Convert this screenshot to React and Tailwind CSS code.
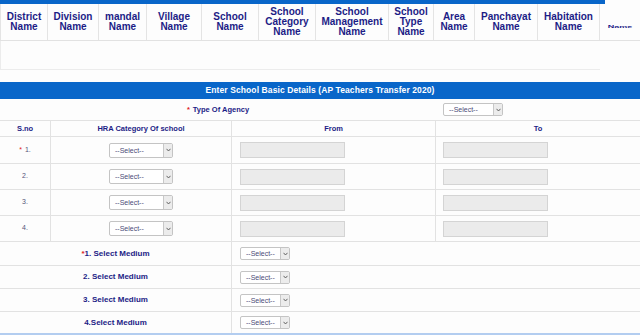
import React from "react";

const NAVY = "text-[#1c1c86]";

function Sel({ w = "w-[64px]", h = "h-[15px]" }) {
  return (
    <div className={`${w} ${h} flex items-stretch bg-white border border-[#c4c4c4] rounded-[2px] overflow-hidden`}>
      <div className="flex-1 flex items-center pl-[5px] text-[7px] text-[#4b4b78] leading-none" style={{ fontFamily: "'Liberation Sans', Arial, sans-serif" }}>
        --Select--
      </div>
      <div className="w-[9px] bg-[#ececec] border-l border-[#c8c8c8] flex items-center justify-center">
        <svg width="5" height="4" viewBox="0 0 5 4">
          <path d="M0.5 0.8 L2.5 3 L4.5 0.8" stroke="#555" strokeWidth="0.9" fill="none" />
        </svg>
      </div>
    </div>
  );
}

function Inp() {
  return <div className="w-[105px] h-[16px] bg-[#ebebeb] border border-[#d4d4d4]" />;
}

const topCols = [
  "District\nName",
  "Division\nName",
  "mandal\nName",
  "Village\nName",
  "School\nName",
  "School\nCategory\nName",
  "School\nManagement\nName",
  "School\nType\nName",
  "Area\nName",
  "Panchayat\nName",
  "Habitation\nName",
];

export default function App() {
  return (
    <div
      className="w-[640px] h-[335px] bg-[#fdfdfd] overflow-hidden flex flex-col"
      style={{ fontFamily: "'Liberation Sans', Arial, sans-serif" }}
    >
      {/* top table */}
      <div className="w-[605px] h-[4px] bg-[#0966c9]" />
      <div className="grid grid-cols-[48px_51px_48px_55px_57px_57px_73px_45px_41px_63px_62px_40px] h-[37px] border-b border-[#e2e2e2]">
        {topCols.map((t, i) => (
          <div
            key={i}
            className={`flex items-center justify-center text-center whitespace-pre-line text-[10px] leading-[10px] font-bold ${NAVY} border-r border-[#e4e4e4] ${i === 0 ? "border-l" : ""}`}
          >
            {t}
          </div>
        ))}
        <div className="flex items-center justify-center">
          <span className={`text-[9px] font-bold ${NAVY} scale-y-[0.4] mt-[9px]`}>Name</span>
        </div>
      </div>
      <div className="h-[29px] w-[600px] border-l border-b border-[#ececec]" />
      <div className="h-[12px]" />

      {/* lower section */}
      <div className="h-[17px] bg-[#0966c9] flex items-center justify-center text-white font-bold text-[8.5px] tracking-[0.1px]">
        Enter School Basic Details (AP Teachers Transfer 2020)
      </div>
      <div className="h-[22px] flex border-b border-[#e2e2e2]">
        <div className={`w-[436px] flex items-center justify-center text-[7.5px] font-bold ${NAVY}`}>
          <span className="text-[#e02020] mr-[3px]">*</span>Type Of Agency
        </div>
        <div className="flex-1 flex items-center pl-[7px]">
          <Sel w="w-[60px]" h="h-[13px]" />
        </div>
      </div>
      <div className={`h-[16px] grid grid-cols-[51px_181px_204px_204px] border-b border-[#e2e2e2] text-[7.5px] font-bold ${NAVY}`}>
        <div className="flex items-center justify-center border-r border-[#e2e2e2]">S.no</div>
        <div className="flex items-center justify-center border-r border-[#e2e2e2]">HRA Category Of school</div>
        <div className="flex items-center justify-center border-r border-[#e2e2e2]">From</div>
        <div className="flex items-center justify-center">To</div>
      </div>
      {["1.", "2.", "3.", "4."].map((n, i) => (
        <div
          key={n}
          className={`${i === 0 ? "h-[27px]" : "h-[26px]"} grid grid-cols-[51px_181px_204px_204px] border-b border-[#e2e2e2]`}
        >
          <div className="flex items-center justify-center border-r border-[#e2e2e2] text-[7px] text-[#55557a]">
            {i === 0 && <span className="text-[#e02020] mr-[3px]">*</span>}
            {n}
          </div>
          <div className="flex items-center justify-center border-r border-[#e2e2e2]">
            <Sel />
          </div>
          <div className="flex items-center pl-[8px] border-r border-[#e2e2e2]">
            <Inp />
          </div>
          <div className="flex items-center pl-[7px]">
            <Inp />
          </div>
        </div>
      ))}
      {["1. Select Medium", "2. Select Medium", "3. Select Medium", "4.Select Medium"].map((t, i) => (
        <div
          key={t}
          className={`${i === 0 ? "h-[24px]" : "h-[23px]"} flex ${i === 3 ? "border-b-2 border-[#b3cdf0]" : "border-b border-[#e2e2e2]"}`}
        >
          <div className={`w-[232px] flex items-center justify-center border-r border-[#e2e2e2] text-[8px] font-bold ${NAVY}`}>
            {i === 0 && <span className="text-[#e02020]">*</span>}
            {t}
          </div>
          <div className="flex-1 flex items-center pl-[8px]">
            <Sel w="w-[50px]" h="h-[13px]" />
          </div>
        </div>
      ))}
    </div>
  );
}
